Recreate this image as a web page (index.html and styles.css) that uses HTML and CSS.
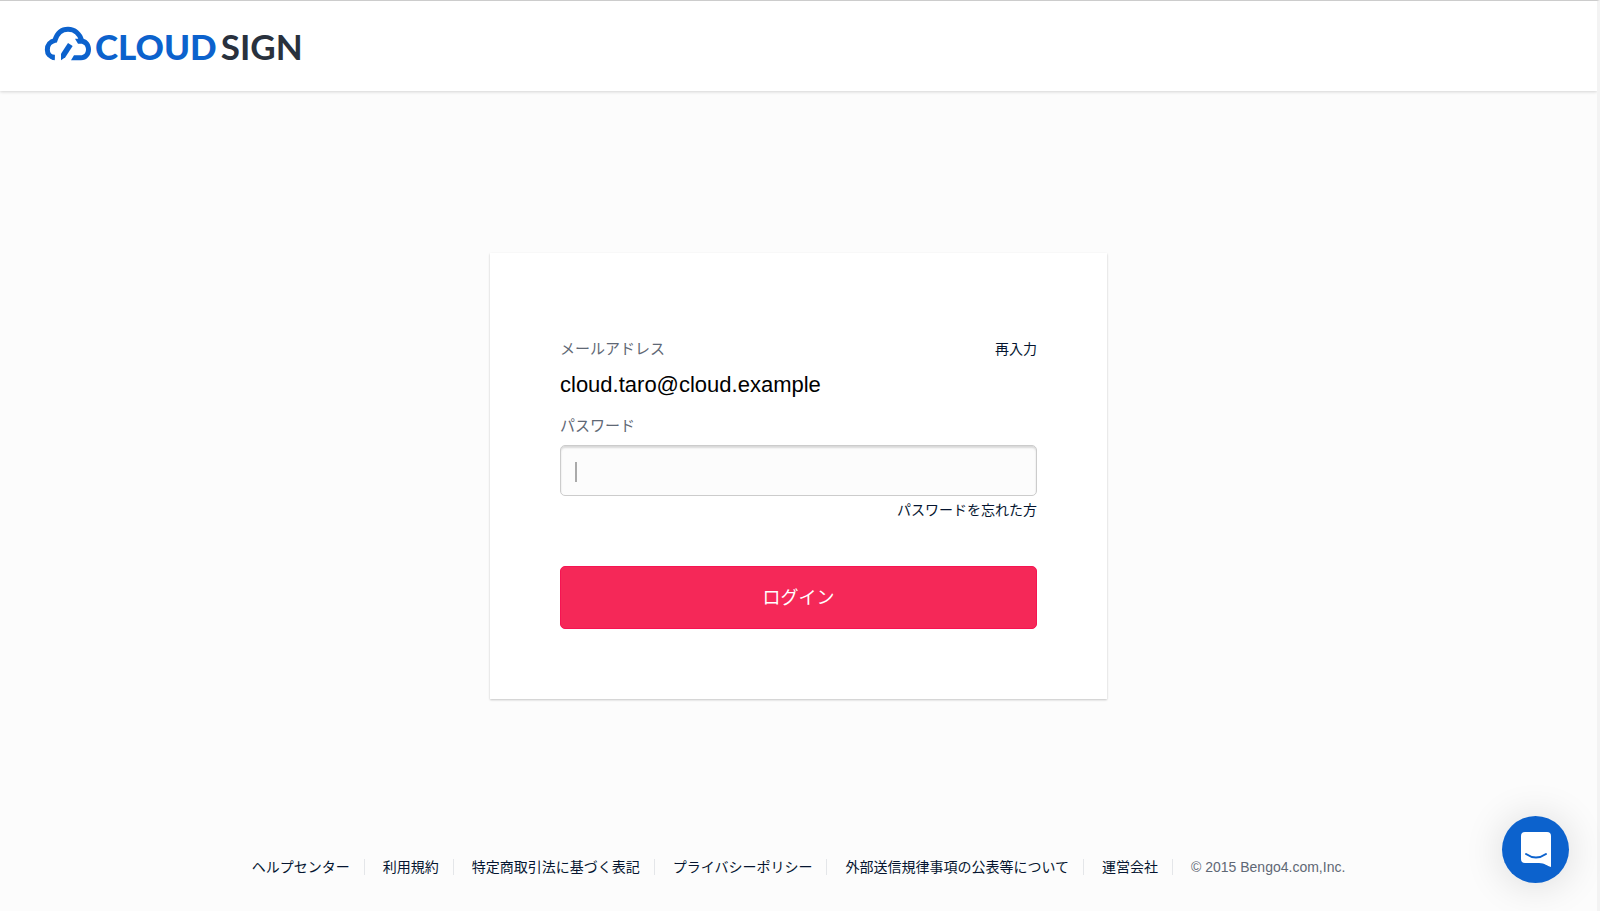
FILE: index.html
```html
<!DOCTYPE html>
<html lang="ja">
<head>
    <meta charset="UTF-8">
    <meta name="viewport" content="width=device-width, initial-scale=1.0">
    <title>ログイン | CLOUDSIGN</title>
    <link rel="stylesheet" href="styles.css">
</head>
<body>

    <header class="header">
        <a class="logo" href="#">
            <svg class="logo-mark" viewBox="0 0 156 120" aria-hidden="true">
                <path d="M35 100 C20 99 13 89 13 77 C13 63 22 52 36 49 C42 29 56 16 75 16 C95 16 110 29 116 50" fill="none" stroke="#0c62cd" stroke-width="15"/>
                <path d="M96 44 L120 44 C135 47 144 60 144 76 C144 95 132 109 114 109 L84 109 L93 94 L113 94 C123 94 129 87 129 76 C129 66 123 59 113 59 L105 59 Z" fill="#0c62cd"/>
                <path d="M26 94 L35 94 L35 109 L26 107 Z" fill="#0c62cd"/>
                <path d="M54 109 L54 89 L75 57 L89 66 L67 100 Z" fill="#0c62cd"/>
            </svg>
            <span class="logo-text"><span class="logo-cloud">CLOUD</span><span class="logo-sign">SIGN</span></span>
        </a>
    </header>

    <main class="main">
        <form class="login-card" action="#" method="post">
            <div class="row">
                <span class="label">メールアドレス</span>
                <a class="link" href="#">再入力</a>
            </div>
            <p class="email">cloud.taro@cloud.example</p>
            <label class="label" for="password">パスワード</label>
            <input class="password" type="password" id="password" name="password">
            <a class="link forgot" href="#">パスワードを忘れた方</a>
            <button class="login-button" type="submit">ログイン</button>
        </form>
    </main>

    <footer class="footer">
        <ul class="footer-list">
            <li><a href="#">ヘルプセンター</a></li>
            <li><a href="#">利用規約</a></li>
            <li><a href="#">特定商取引法に基づく表記</a></li>
            <li><a href="#">プライバシーポリシー</a></li>
            <li><a href="#">外部送信規律事項の公表等について</a></li>
            <li><a href="#">運営会社</a></li>
            <li class="copyright">© 2015 Bengo4.com,Inc.</li>
        </ul>
    </footer>

    <button class="chat-button" type="button" aria-label="チャット">
        <svg class="chat-icon" viewBox="0 0 30 35" aria-hidden="true">
            <path d="M4 0 H26 Q30 0 30 4 V35 C26 34 24 31 18 31 H4 Q0 31 0 27 V4 Q0 0 4 0 Z" fill="#fff"/>
            <path d="M5 22 Q15 29 25 22" fill="none" stroke="#0c62cd" stroke-width="2" stroke-linecap="round"/>
        </svg>
    </button>

</body>
</html>
```

FILE: styles.css
```css
* {
    box-sizing: border-box;
}

body {
    font-family: "Liberation Sans", "Noto Sans CJK JP", sans-serif;
    margin: 0;
    min-height: 100vh;
    display: flex;
    flex-direction: column;
    background-color: #fcfcfc;
    border-top: 1px solid #ccc;
    border-right: 3px solid #f3f3f3;
    color: #000;
}

a {
    color: #051530;
    text-decoration: none;
}

.header {
    height: 90px;
    display: flex;
    align-items: center;
    padding: 0 43px 4px;
    background-color: #fff;
    box-shadow: 0 1px 3px rgba(0, 0, 0, 0.16);
}

.logo {
    display: flex;
    align-items: center;
}

.logo-mark {
    width: 52px;
    height: 40px;
}

.logo-text {
    display: flex;
    gap: 4px;
    padding-top: 4px;
    font-family: Lato, sans-serif;
    font-size: 35px;
    line-height: 40px;
}

.logo-cloud {
    font-weight: 900;
    color: #0c62cd;
}

.logo-sign {
    font-weight: 700;
    color: #29313d;
}

.main {
    flex: 1;
    display: flex;
    justify-content: center;
    align-items: center;
    padding-top: 2px;
}

.login-card {
    width: 617px;
    max-width: 100%;
    display: flex;
    flex-direction: column;
    padding: 84px 70px 70px;
    background-color: #fff;
    box-shadow: 0 1px 2px rgba(0, 0, 0, 0.22);
}

.row {
    display: flex;
    justify-content: space-between;
    align-items: center;
}

.label {
    font-size: 15px;
    line-height: 24px;
    color: #5f6875;
}

.link {
    font-size: 14px;
    line-height: 24px;
}

.email {
    margin: 8px 0 13px;
    font-size: 22px;
    line-height: 32px;
}

.password {
    width: 100%;
    height: 51px;
    margin: 7px 0 2px;
    padding: 0 14px;
    border: 1px solid #ccc;
    border-radius: 5px;
    /* caret */
    background: linear-gradient(#aaa, #aaa) 14px 16px / 2px 20px no-repeat #fcfcfc;
    box-shadow: inset 0 2px 2px rgba(0, 0, 0, 0.14);
    font-size: 18px;
    outline: none;
}

.forgot {
    align-self: flex-end;
}

.login-button {
    height: 63px;
    margin-top: 44px;
    padding: 0 0 4px;
    border: 1px solid #f61452;
    border-radius: 5px;
    background-color: #f52858;
    color: #fff;
    font-family: inherit;
    font-size: 18px;
    cursor: pointer;
}

.footer {
    padding: 0 16px 36px;
}

.footer-list {
    display: flex;
    flex-wrap: wrap;
    justify-content: center;
    margin: 0;
    padding: 0;
    list-style: none;
    font-size: 14px;
    line-height: 16px;
}

.footer-list li {
    margin-right: 18px;
    padding-right: 14px;
    border-right: 1px solid #e4e6e9;
}

.footer-list .copyright {
    margin-right: 0;
    padding-right: 0;
    border-right: none;
    color: #5f6875;
}

.chat-button {
    position: fixed;
    right: 31px;
    bottom: 28px;
    width: 67px;
    height: 67px;
    display: flex;
    justify-content: center;
    align-items: center;
    padding: 0;
    border: none;
    border-radius: 50%;
    background-color: #0c62cd;
    box-shadow: 0 2px 40px rgba(0, 0, 0, 0.14);
    cursor: pointer;
}

.chat-icon {
    width: 30px;
    height: 35px;
}
```
